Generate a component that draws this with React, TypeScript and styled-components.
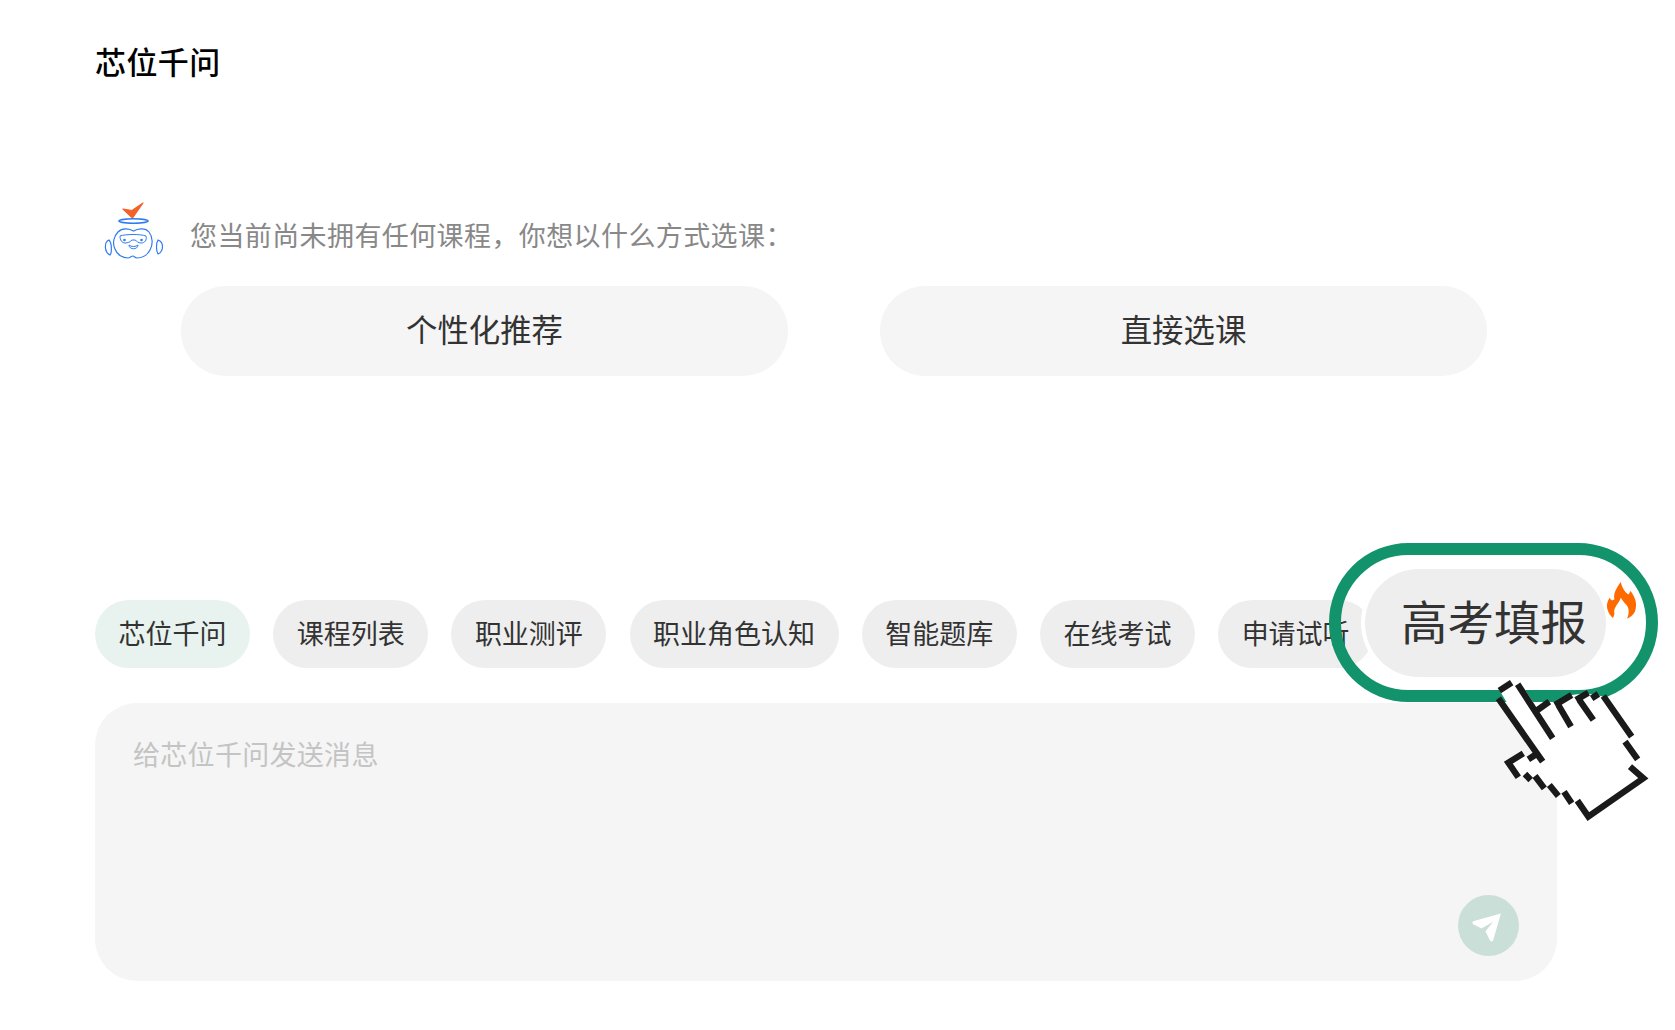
import styled, { createGlobalStyle } from "styled-components";

const chips = ["芯位千问", "课程列表", "职业测评", "职业角色认知", "智能题库", "在线考试", "申请试听"];

const GlobalStyle = createGlobalStyle`
  html, body {
    margin: 0;
    background: #fff;
    font-family: "Noto Sans CJK SC", "Noto Sans", sans-serif;
  }
`;

const Page = styled.div`
  box-sizing: border-box;
  width: 1675px;
  height: 1030px;
  padding: 41px 118px 0 95px;
  overflow: hidden;
`;

const Title = styled.h1`
  margin: 0;
  font-size: 31px;
  line-height: 40px;
  font-weight: 500;
  letter-spacing: 0.4px;
  color: #000;
`;

const Greeting = styled.div`
  display: flex;
  align-items: center;
  gap: 20px;
  height: 70px;
  margin-top: 114px;
  font-size: 27px;
  letter-spacing: 0.4px;
  color: #888;
`;

const GreetingText = styled.span`
  margin-top: 8px;
`;

const Choices = styled.div`
  display: flex;
  gap: 92px;
  margin-top: 21px;
  padding-left: 86px;
`;

const Choice = styled.button`
  width: 607px;
  height: 90px;
  padding: 0 0 5px;
  border: 0;
  border-radius: 45px;
  background: #f5f5f5;
  font: inherit;
  font-size: 31.4px;
  color: #333;
`;

const ChipRow = styled.div`
  position: relative;
  display: flex;
  gap: 23.2px;
  margin-top: 224px;
`;

const Chip = styled.div<{ $active?: boolean }>`
  height: 68px;
  padding: 0 23.5px;
  border-radius: 34px;
  background: ${({ $active }) => ($active ? "#e8f3ef" : "#eee")};
  font-size: 27px;
  line-height: 66px;
  white-space: nowrap;
  color: #333;
`;

const Callout = styled.div`
  position: absolute;
  left: 1234px;
  top: -57px;
  box-sizing: border-box;
  display: flex;
  align-items: center;
  width: 329px;
  height: 159px;
  padding-left: 24px;
  border: 12px solid #12936c;
  border-radius: 80px;
`;

const BigChip = styled.div`
  box-sizing: border-box;
  width: 241px;
  height: 108px;
  padding-left: 36px;
  border-radius: 54px;
  background: #eee;
  box-shadow: 0 0 0 4px #fff;
  font-size: 46.5px;
  line-height: 102px;
  white-space: nowrap;
  color: #333;
`;

const Flame = styled.svg`
  position: absolute;
  left: 264px;
  top: 25px;
  width: 33px;
  height: 40px;
`;

const Hand = styled.svg`
  position: absolute;
  left: 149px;
  top: 115px;
  width: 170px;
  height: 155px;
`;

const InputBox = styled.div`
  display: flex;
  flex-direction: column;
  justify-content: space-between;
  box-sizing: border-box;
  height: 278px;
  margin-top: 35px;
  padding: 31px 38px 25px;
  border-radius: 42px;
  background: #f5f5f5;
`;

const Placeholder = styled.div`
  font-size: 27px;
  line-height: 40px;
  letter-spacing: 0.3px;
  color: #c4c4c4;
`;

const SendButton = styled.div`
  align-self: flex-end;
  width: 61px;
  height: 61px;
  border-radius: 50%;
  background: #c9dfd7;

  svg {
    display: block;
    width: 61px;
    height: 61px;
  }
`;

const Mascot = () => (
  <svg width="75" height="70" viewBox="0 0 75 70" fill="none" stroke="#2f7bf0" strokeWidth="1.2">
    <path d="M28 14 L37 15.5 L48 8 L37.5 23 Z" fill="#f2622a" stroke="#f2622a" strokeLinejoin="round" />
    <ellipse cx="38.5" cy="26" rx="14.5" ry="2.2" strokeWidth="1.6" />
    <path d="M23 37 C28 32 35 34 38.5 36 C42 34 50 32 54 37 C58 42 58 50 55 55 C52 61 46 63 42 63 C40 63 39 61 38 61 C36 61 35 63 33 63 C28 63 22 60 20 54 C17 48 19 41 23 37 Z" />
    <path strokeWidth="1" d="M25 41 C30 39 46 39 51 41 C52 45 50 48 46 48 C43 48 42 46 40 45 L37 45 C35 47 33 48 30 48 C27 48 25 45 25 41 Z" />
    <circle cx="29.5" cy="45" r="1.3" fill="#2f7bf0" stroke="none" />
    <circle cx="46.5" cy="45" r="1.3" fill="#2f7bf0" stroke="none" />
    <path strokeWidth="1" d="M34 50 C36 52 41 52 43 50 C43 55 34 55 34 50 Z" />
    <path d="M14 45 C9 47 9 57 15 60 C17 58 17 48 14 45 Z" />
    <path d="M63 45 C69 47 69 56 63 59 C61 56 61 48 63 45 Z" />
  </svg>
);

export default function App() {
  return (
    <Page>
      <GlobalStyle />
      <Title>芯位千问</Title>
      <Greeting>
        <Mascot />
        <GreetingText>您当前尚未拥有任何课程，你想以什么方式选课：</GreetingText>
      </Greeting>
      <Choices>
        <Choice>个性化推荐</Choice>
        <Choice>直接选课</Choice>
      </Choices>
      <ChipRow>
        {chips.map((chip, idx) => (
          <Chip key={chip} $active={idx === 0}>
            {chip}
          </Chip>
        ))}
        <Callout>
          <BigChip>高考填报</BigChip>
          <Flame viewBox="880 150 105 125">
            <path
              fill="#ff6a00"
              d="M905 270 C885 250 880 225 895 205 C900 215 905 215 910 210 C905 190 920 170 930 155 C935 175 945 190 955 195 C958 190 960 187 960 183 C975 200 985 225 975 250 C970 260 960 268 950 272 C958 255 958 235 945 225 C940 218 935 212 930 205 C925 225 905 235 910 255 C910 260 908 265 905 270 Z"
            />
          </Flame>
          <Hand viewBox="0 0 510 465">
            <path
              fill="#fff"
              d="M28 60 L75 40 L95 45 L145 120 L180 95 L195 105 L245 75 L285 70 L320 75 L340 80 L425 200 L405 220 L445 270 L425 285 L465 325 L295 440 L265 395 L235 395 L215 370 L190 370 L170 345 L150 345 L130 320 L110 325 L85 315 L50 280 L100 250 L115 265 L150 265 Z"
            />
            <path
              fill="none"
              stroke="#1a1a1a"
              strokeWidth="19"
              d="M28 62 L65 38 M25 85 L158 275 M83 43 L188 205 M140 122 L178 95 M195 105 L245 75 M205 105 L243 170 M258 90 L295 68 M268 90 L310 150 M305 85 L325 72 M340 78 L425 200 M405 215 L443 268 M420 290 L460 325 L295 440 L262 392 M222 365 L245 400 M178 345 L205 378 M135 318 L163 355 M105 312 L122 330 M100 250 L55 278 L85 322 M115 268 L135 255"
            />
          </Hand>
        </Callout>
      </ChipRow>
      <InputBox>
        <Placeholder>给芯位千问发送消息</Placeholder>
        <SendButton>
          <svg viewBox="0 0 182 182">
            <path
              fill="#fff"
              d="M128 55 L45 78 Q40 84 47 88 L70 100 L105 80 L82 108 L95 135 Q100 142 105 135 Z"
            />
          </svg>
        </SendButton>
      </InputBox>
    </Page>
  );
}
